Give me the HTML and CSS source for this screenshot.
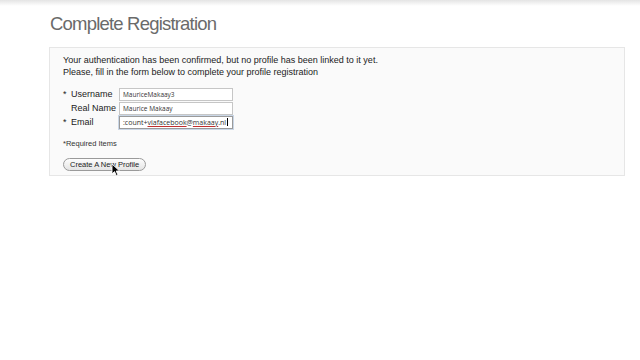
FILE: index.html
```html
<!DOCTYPE html>
<html lang="en">
<head>
  <meta charset="UTF-8">
  <title>Complete Registration</title>
  <link rel="stylesheet" href="styles.css">
</head>
<body>
  <div class="topshade"></div>
  <div class="page">
    <h1>Complete Registration</h1>

    <div class="panel">
      <p class="intro">Your authentication has been confirmed, but no profile has been linked to it yet.<br>
      Please, fill in the form below to complete your profile registration</p>

      <form class="regform">
        <div class="row">
          <label for="username"><span class="req">*</span>Username</label>
          <input type="text" id="username" value="MauriceMakaay3">
        </div>
        <div class="row">
          <label for="realname"><span class="req"></span>Real Name</label>
          <input type="text" id="realname" value="Maurice Makaay">
        </div>
        <div class="row">
          <label for="email"><span class="req">*</span>Email</label>
          <div class="input focus"><span>:count+<u>viafacebook</u>@<u>makaay</u>.nl</span><i class="caret"></i></div>
        </div>

        <p class="note">*Required Items</p>

        <div class="btnwrap">
          <button type="button" class="btn">Create A New Profile</button>
          <svg class="cursor" width="10" height="14" viewBox="0 0 10 14">
            <path d="M1 1 L1 11 L3.5 8.6 L5.4 12.8 L7 12.1 L5.2 8 L8.6 8 Z" fill="#000" stroke="#fff" stroke-width="0.9"/>
          </svg>
        </div>
      </form>
    </div>
  </div>
</body>
</html>
```

FILE: styles.css
```css
html, body {
  margin: 0;
  padding: 0;
  background: #fff;
  font-family: "Liberation Sans", Arial, sans-serif;
}

.topshade {
  height: 6px;
  background: linear-gradient(#e4e4e4, #fff);
}

.page {
  padding: 0 40px 0 49px;
}

h1 {
  margin: 6px 0 0 1px;
  font-size: 18.5px;
  font-weight: normal;
  color: #6a6a6a;
  letter-spacing: -0.8px;
  line-height: 24px;
}

.panel {
  margin-top: 11px;
  width: 549px;
  background: #fafafa;
  border: 1px solid #e6e6e6;
  padding: 6px 12px 4px 13px;
}

.intro {
  margin: 0;
  font-size: 9px;
  line-height: 12px;
  color: #222;
}

.regform {
  margin-top: 9px;
}

.row {
  display: flex;
  align-items: center;
  height: 14px;
}

.row label {
  width: 56px;
  font-size: 9px;
  color: #222;
  display: flex;
  white-space: nowrap;
}

.req {
  width: 8px;
  display: inline-block;
}

.row input,
.input {
  box-sizing: border-box;
  width: 114px;
  height: 13px;
  margin: 0;
  padding: 0 3px;
  border: 1px solid #c6c6c6;
  background: #fff;
  font-family: "Open Sans", sans-serif;
  font-size: 6.5px;
  color: #333;
}

.input {
  display: flex;
  align-items: center;
  overflow: hidden;
  white-space: nowrap;
}

.input.focus {
  border: 1px solid #9a9a9a;
  box-shadow: 0 0 0 1px #c9d6e6;
  font-size: 7px;
}

.input u {
  text-decoration-color: #c03030;
}

.caret {
  display: inline-block;
  width: 1px;
  height: 8px;
  background: #000;
  margin-left: 1px;
}

.note {
  margin: 10px 0 0 0;
  font-size: 7.5px;
  color: #333;
}

.btnwrap {
  position: relative;
  margin-top: 5px;
}

.btn {
  height: 13px;
  padding: 0 6px;
  border: 1px solid #9a9a9a;
  border-radius: 7px;
  background: linear-gradient(#fdfdfd, #e4e4e4);
  font-family: "Liberation Sans", Arial, sans-serif;
  font-size: 7.5px;
  color: #222;
  line-height: 11px;
}

.cursor {
  position: absolute;
  left: 48px;
  top: 10px;
}
```
